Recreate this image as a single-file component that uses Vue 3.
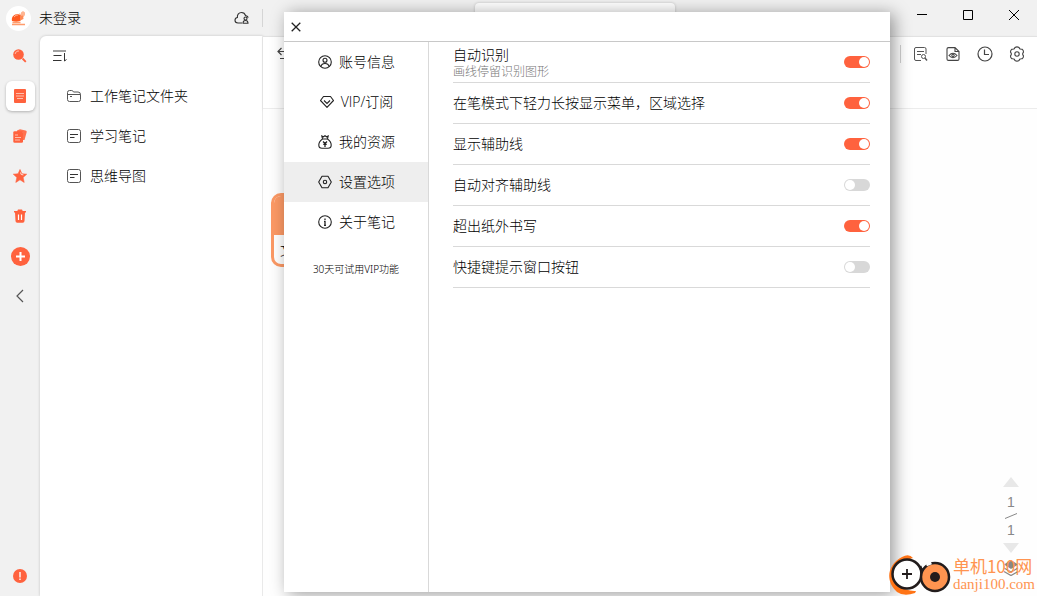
<script setup>
import { ref } from 'vue'

const notes = [
  { name: '工作笔记文件夹', icon: 'folder' },
  { name: '学习笔记', icon: 'note' },
  { name: '思维导图', icon: 'note' },
]

const menu = [
  { name: '账号信息', icon: 'user' },
  { name: 'VIP/订阅', icon: 'vip' },
  { name: '我的资源', icon: 'bag' },
  { name: '设置选项', icon: 'hex' },
  { name: '关于笔记', icon: 'info' },
]
const current = ref('hex')

const options = ref([
  { id: 'recognise', name: '自动识别', hint: '画线停留识别图形', on: true },
  { id: 'longpress', name: '在笔模式下轻力长按显示菜单，区域选择', on: true },
  { id: 'guides', name: '显示辅助线', on: true },
  { id: 'snap', name: '自动对齐辅助线', on: false },
  { id: 'outside', name: '超出纸外书写', on: true },
  { id: 'hotkeys', name: '快捷键提示窗口按钮', on: false },
])
</script>

<template>
  <div class="app">
    <header class="titlebar">
      <div class="account">
        <span class="avatar">
          <svg width="16" height="16" viewBox="0 0 16 16">
            <path d="M1 11C0 7 3 4 7 4c3 0 4 3 3 6-1 2-6 2-9 1z" fill="#ff5a1f" />
            <path d="M7 5l2-2 1 2M10 2.500l2-1.500 2 1.500v2.500l-1.500 2H10z" fill="#ffb592" />
            <path d="M9 6l3-.5.5 3.500L9 10.500z" fill="#ff8a55" />
            <path d="M3 7q2-2.500 4-2" fill="none" stroke="#ffb592" />
            <path d="M1.500 12.500h8M1 14.500h13" stroke="#ff9c6c" stroke-width="1.300" />
          </svg>
        </span>
        <span class="login">未登录</span>
        <button class="cloud" aria-label="云同步">
          <svg width="16" height="14" viewBox="0 0 16 14" fill="none" stroke="#333" stroke-width="1.100">
            <path d="M8 12H4C2 12 1 10.700 1 9.300 1 7.700 2 6.700 3.400 6.500 3 3.500 5 1.500 7.500 1.500c2 0 3.500 1.200 4 3 1.500.3 2.500 1 2.500 2.300" />
            <circle cx="11.500" cy="7.500" r="1.500" />
            <path d="M9 12.300c0-1.700 1-2.800 2.500-2.800s2.500 1.100 2.500 2.800z" />
          </svg>
        </button>
      </div>
      <div class="tab"></div>
      <div class="window-controls">
        <button aria-label="最小化"><svg width="10" height="10" viewBox="0 0 10 10"><path d="M0 4.500h10" stroke="#000" /></svg></button>
        <button aria-label="最大化"><svg width="10" height="10" viewBox="0 0 10 10"><path d="M.5.500h9v9h-9z" fill="none" stroke="#000" /></svg></button>
        <button aria-label="关闭"><svg width="10" height="10" viewBox="0 0 10 10"><path d="M0 0l10 10M10 0L0 10" stroke="#000" /></svg></button>
      </div>
    </header>

    <div class="body">
      <nav class="rail">
        <button aria-label="搜索">
          <svg width="14" height="14" viewBox="0 0 14 14"><circle cx="5.500" cy="5.500" r="5.300" fill="#ff623e" /><path d="M9.500 9.500l3.300 3.300" stroke="#ff623e" stroke-width="1.800" /><path d="M2.200 4.800C2.600 3 4 2 5.800 2" fill="none" stroke="#ffd2c6" /></svg>
        </button>
        <button class="active" aria-label="笔记">
          <svg width="12" height="14" viewBox="0 0 12 14"><rect width="12" height="14" rx="1" fill="#ff623e" /><path d="M2 4.500h8M2 7h8M3 9.500h6" stroke="#ffc9ba" stroke-width=".9" /></svg>
        </button>
        <button aria-label="素材">
          <svg width="14" height="14" viewBox="0 0 14 14"><path d="M4 1.500L7 .3l5.500 1.200q1.500.3 1.200 1.500L11.500 11H10V3H4z" fill="#ff7250" /><rect x=".3" y="2.300" width="9.700" height="11.400" rx="1.300" fill="#ff623e" /><path d="M2 6h3M2 8.500h6M2 11h5" stroke="#ffc9ba" stroke-width=".9" /></svg>
        </button>
        <button aria-label="收藏">
          <svg width="14" height="14" viewBox="0 0 14 14"><path d="M7 .5l1.900 4.300 4.800.4-3.600 3.200 1.100 5L7 10.800l-4.200 2.600 1.100-5L.3 5.200l4.800-.4z" fill="#ff623e" stroke="#ff623e" stroke-linejoin="round" stroke-width=".6" /><path d="M7.500 3.500l.7 2 2.200.4" fill="none" stroke="#ffe0d8" /></svg>
        </button>
        <button aria-label="回收站">
          <svg width="14" height="14" viewBox="0 0 14 14"><path d="M5 .5h4l.7 1.500H13v1.500h-1L11.500 12q-.1 1.700-1.700 1.700H4.200Q2.600 13.700 2.500 12L2 3.500H1V2h3.300z" fill="#ff623e" /><path d="M5.500 5.500v5.500M8.500 5.500v5.500" stroke="#fff" stroke-width="1.200" /></svg>
        </button>
        <button aria-label="新建">
          <svg width="19" height="19" viewBox="0 0 19 19"><circle cx="9.500" cy="9.500" r="9.500" fill="#ff623e" /><path d="M9.500 5v9M5 9.500h9" stroke="#fff" stroke-width="2" /></svg>
        </button>
        <button aria-label="收起">
          <svg width="8" height="14" viewBox="0 0 8 14"><path d="M7 1L1 7l6 6" fill="none" stroke="#555" stroke-width="1.200" /></svg>
        </button>
        <button class="last" aria-label="提示">
          <svg width="14" height="14" viewBox="0 0 14 14"><circle cx="7" cy="7" r="7" fill="#ff623e" /><path d="M7 3v5.500M7 9.500v1.500" stroke="#ffe8e2" stroke-width="1.600" /></svg>
        </button>
      </nav>

      <aside class="sidebar">
        <button class="sort" aria-label="排序">
          <svg width="14" height="12" viewBox="0 0 14 12"><path d="M0 1h13" stroke="#888" stroke-width="1.600" /><path d="M.5 5.500h8M0 10.500h8.500M11.500 3v8l2-1.500" fill="none" stroke="#333" /></svg>
        </button>
        <a v-for="n in notes" :key="n.name" class="note" href="#">
          <svg v-if="n.icon === 'folder'" width="14" height="14" viewBox="0 0 14 14" fill="none" stroke="#555"><path d="M.5 3.500q0-2 2-2h2.200q.8 0 1.200.6l.6.900h4.500q2.500 0 2.500 2.500v5q0 2-2 2h-9q-2 0-2-2z" /><path d="M.5 5.500h13M3 7.500h2" /></svg>
          <svg v-else width="14" height="14" viewBox="0 0 14 14" fill="none" stroke="#555"><rect x=".5" y=".5" width="13" height="13" rx="2" /><path d="M3 5.500h8M3 8.500h4.500" stroke="#333" /></svg>
          <span>{{ n.name }}</span>
        </a>
      </aside>

      <main class="workspace">
        <div class="toolbar">
          <button class="undo" aria-label="撤销"><svg width="16" height="14" viewBox="0 0 16 14" fill="none" stroke="#444" stroke-width="1.200"><path d="M4.500 1L1 4.500 4.500 8M1 4.500h9c5 0 5 7 0 7H3" /></svg></button>
          <span class="rule"></span>
          <button aria-label="查找"><svg width="14" height="14" viewBox="0 0 14 14" fill="none" stroke="#555"><path d="M12 7V2q0-1.500-1.500-1.500H2Q.5.500.5 2v10q0 1.500 1.500 1.500h5M3 4.500h7M3 7.500h4" /><circle cx="9.500" cy="9.500" r="2" /><path d="M11 11l2 2.500" stroke-width="1.400" /></svg></button>
          <button aria-label="预览"><svg width="14" height="14" viewBox="0 0 14 14" fill="none" stroke="#444" stroke-width="1.100"><path d="M9 .6H2.500Q1 .6 1 2v10q0 1.400 1.500 1.400h9Q13 13.400 13 12V4.500zM9 .6v3.900h4" /><path d="M3 8.500q4-4.500 8 0-4 4.500-8 0z" /><circle cx="7" cy="8.500" r="1.200" /></svg></button>
          <button aria-label="历史"><svg width="16" height="16" viewBox="0 0 16 16" fill="none" stroke="#444" stroke-width="1.200"><circle cx="8" cy="8" r="7" /><path d="M7.500 3.500v5H12" /></svg></button>
          <button aria-label="设置"><svg width="16" height="16" viewBox="0 0 16 16" fill="none" stroke="#444" stroke-width="1.100"><path d="M6 1.500q2-1.300 4 0l.7 1.300q.6.400 1.400.4l1.200.1q1.200 1 1.200 2.700l-.8 1.500v1l.8 1.500q0 1.700-1.200 2.700l-1.200.1q-.8 0-1.400.4L10 14.500q-2 1.300-4 0l-.7-1.300q-.6-.4-1.400-.4l-1.200-.1Q1.500 11.700 1.500 10l.8-1.500v-1L1.500 6q0-1.700 1.200-2.700l1.200-.1q.8 0 1.400-.4z" /><circle cx="8" cy="8" r="2.200" /></svg></button>
        </div>
        <div class="canvas">
          <div class="node"><div class="node-head"></div><div class="node-body">文</div></div>
          <div class="pager">
            <button aria-label="上一页"><svg width="16" height="10" viewBox="0 0 16 10"><path d="M8 0l8 10H0z" fill="#e8e8e8" /></svg></button>
            <span class="page">1</span>
            <svg width="14" height="8" viewBox="0 0 14 8"><path d="M1 6.500l12-5" stroke="#888" /></svg>
            <span class="page">1</span>
            <button aria-label="下一页"><svg width="16" height="10" viewBox="0 0 16 10"><path d="M8 10L0 0h16z" fill="#e8e8e8" /></svg></button>
            <button class="layers" aria-label="图层"><svg width="16" height="16" viewBox="0 0 16 16"><path d="M8 0l7 4.500L8 9 1 4.500z" fill="#888" /><path d="M1 8l7 4 7-4M1 11.500l7 4 7-4" fill="none" stroke="#888" stroke-width="1.300" /></svg></button>
          </div>
        </div>
      </main>
    </div>

    <section class="dialog" role="dialog" aria-label="设置选项">
      <header class="dialog-head">
        <button aria-label="关闭设置"><svg width="10" height="10" viewBox="0 0 10 10"><path d="M.7.700l8.600 8.600M9.300.700L.7 9.300" stroke="#222" stroke-width="1.300" /></svg></button>
      </header>
      <div class="dialog-body">
        <nav class="menu">
          <button v-for="m in menu" :key="m.icon" :class="{ selected: current === m.icon }" @click="current = m.icon">
            <svg width="14" height="14" viewBox="0 0 14 14" fill="none" stroke="#222" stroke-width="1.100">
              <template v-if="m.icon === 'user'"><circle cx="7" cy="7" r="6.300" /><circle cx="7" cy="5.300" r="2" /><path d="M3 11.500Q3.500 8.500 7 8.500t4 3" /></template>
              <template v-else-if="m.icon === 'vip'"><path d="M3.500 1.500h7l3 4L7 12.300.500 5.500z" stroke-linejoin="round" /><path d="M4 5.500l3 3 3-3" /></template>
              <template v-else-if="m.icon === 'bag'"><path d="M4.500 4Q.8 6.500.8 10q0 3.300 3.200 3.300h6q3.200 0 3.200-3.300 0-3.500-3.700-6zM4.500 4L3.800 1l1.700.8L7 .7l1.500 1.100 1.700-.8L9.500 4" /><path d="M5 6.500l2 2 2-2M7 8.500v3.500M5.300 9.300h3.400" stroke-width="1.300" /></template>
              <template v-else-if="m.icon === 'hex'"><path d="M4 1.300h6L13.300 7 10 12.700H4L.7 7z" stroke-linejoin="round" /><circle cx="7" cy="7" r="1.700" /></template>
              <template v-else><circle cx="7" cy="7" r="6.300" /><path d="M7 3.500V5M6 6.300h1v4M6 10.300h2" stroke-width="1.300" /></template>
            </svg>
            <span>{{ m.name }}</span>
          </button>
          <p class="trial">30天可试用VIP功能</p>
        </nav>
        <div class="options">
          <label v-for="o in options" :key="o.id" class="option" :for="o.id">
            <span class="label">{{ o.name }}<small v-if="o.hint">{{ o.hint }}</small></span>
            <input :id="o.id" v-model="o.on" type="checkbox" />
          </label>
        </div>
      </div>
    </section>

    <div class="brand">
      <svg width="64" height="42" viewBox="0 0 64 42">
        <path d="M24 4Q20-1 13 3C-2 11-4 27 8 38q7 5 18 1l1-2C12 38 2 26 7 15q3-6 10-9z" fill="#ff7416" />
        <circle cx="18" cy="20" r="14.500" fill="#fff" stroke="#221c1c" stroke-width="2.500" />
        <path d="M18 15v10M13 20h10" stroke="#221c1c" stroke-width="1.800" />
        <path d="M31 12q1 5 5 5" fill="none" stroke="#221c1c" stroke-width="3" />
        <circle cx="46" cy="23" r="14" fill="#ff9450" stroke="#221c1c" stroke-width="2.500" />
        <circle cx="46" cy="23" r="5" fill="#221c1c" />
        <path d="M37 10l5-2" stroke="#fefefe" stroke-width="5" />
      </svg>
      <div class="brand-text"><span>单机100网</span><span class="site">danji100.com</span></div>
    </div>
  </div>
</template>

<style>
body { margin: 0; }
</style>

<style scoped>
.app {
  position: relative;
  display: flex;
  flex-direction: column;
  min-height: 100vh;
  overflow: hidden;
  background: #f1f1f1;
  color: #000;
  font: 300 14px/20px "Open Sans", "Noto Sans CJK SC", sans-serif;
}
.app * { box-sizing: border-box; }
button {
  display: flex;
  align-items: center;
  justify-content: center;
  padding: 0;
  border: 0;
  background: none;
  color: inherit;
  font: inherit;
}
svg { flex: none; display: block; }

.titlebar { display: flex; height: 36px; }
.account { display: flex; align-items: center; width: 263px; padding: 0 13px 0 6px; position: relative; }
.account::after { content: ""; position: absolute; right: 0; top: 9px; height: 18px; width: 1px; background: #d5d5d5; }
.avatar { display: flex; align-items: center; justify-content: center; width: 25px; height: 25px; border-radius: 50%; background: #fff; }
.login { margin-left: 8px; }
.cloud { margin-left: auto; }
.tab { width: 200px; margin: 3px 0 0 212px; border-radius: 4px 4px 0 0; background: #fff; box-shadow: 0 0 3px #0003; }
.window-controls { display: flex; margin-left: auto; }
.window-controls button { width: 46px; height: 30px; }

.body { display: flex; flex: 1; }
.rail { display: flex; flex-direction: column; width: 40px; }
.rail button { width: 29px; height: 30px; margin: 5px 5px 5px 6px; padding-right: 1px; border-radius: 6px; }
.rail .active { background: #fff; box-shadow: 0 1px 3px #0004; }
.rail .last { margin-top: auto; }

.sidebar { width: 223px; background: #fff; border-radius: 6px 0 0; box-shadow: 0 0 3px #0003; border-right: 1px solid #e9e9e9; }
.sort { height: 40px; margin-left: 13px; }
.note { display: flex; align-items: center; gap: 9px; height: 40px; padding-left: 27px; color: inherit; text-decoration: none; }

.workspace { display: flex; flex: 1; flex-direction: column; background: #fff; }
.toolbar { display: flex; height: 73px; padding: 0 4px 0 6px; border-top: 1px solid #e2e2e2; border-bottom: 1px solid #ececec; box-shadow: 0 1px 3px #0001; }
.toolbar button { width: 32px; height: 34px; }
.toolbar .undo { margin-right: auto; }
.rule { width: 1px; height: 18px; margin: 8px 4px; background: #d0d0d0; }
.canvas { position: relative; flex: 1; background: #fefefe; }
.node { position: absolute; left: 8px; top: 84px; width: 120px; height: 74px; border: 3px solid #fc9965; border-radius: 10px; overflow: hidden; background: #fff; }
.node-head { height: 39px; background: #fc9965; }
.node-body { padding: 5px 6px; }
.pager { position: absolute; right: 18px; bottom: 20px; display: flex; flex-direction: column; align-items: center; width: 16px; }
.page { color: #888; font-family: "Liberation Sans", sans-serif; }
.pager > :first-child { margin-bottom: 5px; }
.page + button { margin-top: 3px; }
.layers { margin-top: 7px; }

.dialog {
  position: absolute;
  left: 284px;
  right: 147px;
  top: 12px;
  bottom: 4px;
  display: flex;
  flex-direction: column;
  background: #fff;
  box-shadow: 4px 2px 16px #0006;
}
.dialog-head { display: flex; height: 30px; border-bottom: 1px solid #c8c8c8; }
.dialog-head button { width: 24px; }
.dialog-body { display: flex; flex: 1; }
.menu { width: 145px; border-right: 1px solid #d9d9d9; }
.menu button { width: 100%; height: 40px; gap: 7px; padding-left: 1px; }
.menu .selected { background: #eee; }
.trial { margin: 17px 0 0; text-align: center; font-size: 10px; font-family: "Noto Sans", "Noto Sans CJK SC", sans-serif; }
.options { flex: 1; padding: 0 20px 0 24px; }
.option { display: flex; align-items: center; justify-content: space-between; height: 41px; border-bottom: 1px solid #d9d9d9; }
small { display: block; margin-bottom: 1px; color: #777; font-size: 12px; line-height: 14px; }
input { appearance: none; width: 26px; height: 12px; margin: 0; padding: 1px; border-radius: 6px; background: #d8d8d8; }
input::before { content: ""; display: block; width: 10px; height: 10px; border-radius: 50%; background: #fff; }
input:checked { background: #ff623e; }
input:checked::before { margin-left: auto; }

.brand { position: absolute; right: 2px; bottom: 0; display: flex; align-items: center; color: #ff9450; font-weight: 400; }
.brand-text { display: flex; flex-direction: column; font-family: "Noto Sans CJK SC", sans-serif; font-size: 17px; line-height: 19px; }
.site { font-family: "Liberation Serif", serif; font-size: 15px; }
</style>
